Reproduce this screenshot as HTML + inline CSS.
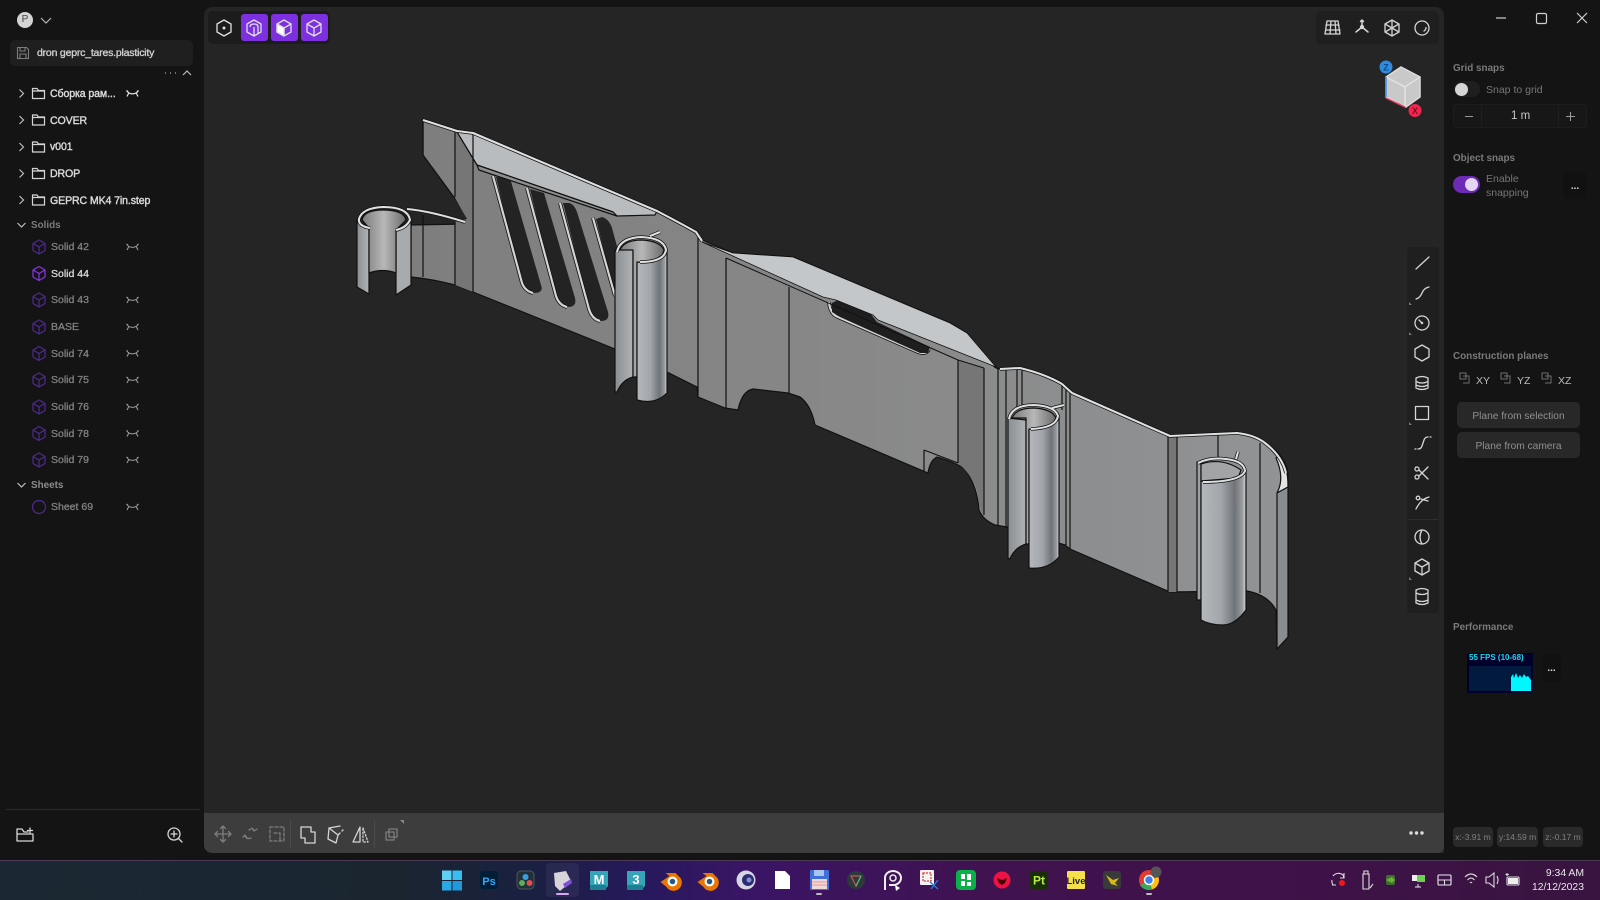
<!DOCTYPE html>
<html><head><meta charset="utf-8"><style>
*{box-sizing:border-box;margin:0;padding:0}
html,body{width:1600px;height:900px;overflow:hidden;background:#141414;font-family:"Liberation Sans","Noto Sans CJK SC",sans-serif}
#root{position:absolute;left:0;top:0;width:1600px;height:900px;overflow:hidden;background:#141414;filter:blur(.3px)}
.a{position:absolute}
.t{position:absolute;white-space:nowrap;line-height:14px;font-size:11px}
.row{color:#dadada;left:50px;font-size:10.6px;letter-spacing:-.12px;-webkit-text-stroke:.4px #dadada}
.sol{color:#808080;left:51px;font-size:10.5px;-webkit-text-stroke:.3px #808080}
.h{color:#7a7a7a;font-weight:700;font-size:9.9px}
svg{position:absolute;overflow:visible;width:1px;height:1px}
.i{fill:none;stroke:#d5d5d5;stroke-width:1.3;stroke-linecap:round;stroke-linejoin:round}
</style></head><body><div id="root">
<svg style="position:absolute;width:0;height:0"><defs>
<g id="cube"><path d="M0-7 6-3.500v7L0 7-6 3.500v-7ZM-6-3.500 0 0 6-3.500M0 0v7" fill="none" stroke-width="1.200" stroke-linejoin="round"/></g>
<g id="eye"><path d="M-6-3C-3 1.500 3 1.500 6-3M-5.500 3-3.800-.3M5.500 3 3.800-.3M-6-3l1.500 1M6-3 4.500-2" fill="none" stroke="#9a9a9a" stroke-width="1.100"/></g>
<g id="fold"><path d="M-6-5H-1.500L0-3H6V5H-6ZM-6-2.500H6" fill="none" stroke="#d5d5d5" stroke-width="1.200"/></g>
<g id="chev"><path d="M-2-4 2 0-2 4" fill="none" stroke="#bdbdbd" stroke-width="1.200"/></g>
<g id="down"><path d="M-4-2 0 2 4-2" fill="none" stroke="#bdbdbd" stroke-width="1.200"/></g>
<linearGradient id="wall" x1="0" x2="1" y1="0" y2="0"><stop offset="0" stop-color="#7e7e7e"/><stop offset=".5" stop-color="#888"/><stop offset="1" stop-color="#919395"/></linearGradient>
<linearGradient id="cyl" x1="0" x2="1" y1="0" y2="0"><stop offset="0" stop-color="#b4b8bc"/><stop offset=".45" stop-color="#a2a6aa"/><stop offset=".75" stop-color="#6f7479"/><stop offset=".92" stop-color="#999da1"/><stop offset="1" stop-color="#d8dadc"/></linearGradient>
<linearGradient id="cyl2" x1="0" x2="1" y1="0" y2="0"><stop offset="0" stop-color="#8c8f92"/><stop offset="1" stop-color="#b0b3b6"/></linearGradient>
<linearGradient id="inner" x1="0" x2="1" y1="0" y2="0"><stop offset="0" stop-color="#7a7a7a"/><stop offset=".5" stop-color="#b8b8b8"/><stop offset="1" stop-color="#6a6a6a"/></linearGradient>
<path id="rims" fill="none" d="M423 120 L457 131 L473 133 L657 211 Q680 223 696 232 L702 241
M1000 369 L1020 368 Q1045 374 1062 384 L1072 393 L1170 436 L1237 433 Q1255 435 1265 443 Q1282 456 1286 473
M370 228 Q358 226 359 219 Q362 208 383 207 Q408 207 410 220 Q406 228 396 230
M407 209 Q430 211 465 222
M617 252 Q620 238 641 237 Q664 238 666 250 Q664 262 640 262
M650 236 L660 232
M1009 419 Q1012 405 1034 405 Q1055 406 1058 416 Q1056 428 1031 429
M1052 408 L1064 405
M1198 463 Q1210 457 1226 459 Q1244 461 1245 471 Q1240 482 1203 482
M1236 459 L1238 452"/>
<path id="lips" fill="none" d="M493 176 L522 283 Q525 291 533 293
M527 188 L556 296 Q559 305 567 307
M560 203 L589 309 Q592 319 600 321
M593 218 L615 296
M829 302 Q830 314 838 317 L918 352 Q926 355 929 349"/>
</defs></svg>

<div class="a" style="left:204px;top:7px;width:1240px;height:846px;background:#252525;border-radius:8px 8px 0 8px"></div>

<!-- MODEL -->
<svg class="a" style="left:0;top:0;width:1600px;height:900px" viewBox="0 0 1600 900">
<g stroke="#111" stroke-width="1.200" stroke-linejoin="round">
<path d="M423 119 L457 130 L473 132 L657 210 Q680 222 697 231 L702 240 L733 253 L793 257 L950 323 L967 333 L990 362 Q995 369 1000 369 L1020 367 Q1045 373 1063 383 L1072 392 L1170 435 L1237 432 Q1255 434 1265 442 Q1285 455 1288 473 L1288 637 L1277 649 L1276 610 Q1268 595 1247 591 L1170 592 L1070 549 L1065 545 L1007 527 L995 525 Q983 520 979 510 Q977 485 965 470 Q960 464 937 457 Q930 460 928 473 L815 425 Q811 405 800 397 L788 393 L753 389 Q742 391 738 410 L725 408 L698 397 L697 387 L667 372 L615 349 L473 292 L455 285 Q432 279 411 277 L411 225 L465 224 L467 215 L423 155 Z" fill="url(#wall)"/>
<path d="M958 360 L984 368 V517 Q979 508 978 495 Q975 478 958 463Z M1168 435 L1177 435 V592 H1168Z M455 132 L473 135 V292 L455 285 V222 L467 219 L455 198Z" fill="#767676" stroke="none"/>
<path d="M496 177 L510 178 L541 285 Q544 293 534 293 L528 292 Q524 291 522 284Z" fill="#232323" stroke="none"/>
<path d="M530 189 L544 193 L575 298 Q577 307 568 307 L562 306 Q558 305 556 297Z" fill="#232323" stroke="none"/>
<path d="M563 203 L569 203 Q574 204 577 212 L608 312 Q610 321 601 321 L596 320 Q592 319 590 310Z" fill="#232323" stroke="none"/>
<path d="M596 219 L602 217 Q609 219 612 228 L618 250 V296 L614 290Z" fill="#232323" stroke="none"/>
<use href="#lips" stroke="#111" stroke-width="3.800"/><use href="#lips" stroke="#d2d4d5" stroke-width="2.200"/>
<path d="M832 303 L838 300 L870 313 L877 322 L930 347 L928 353 L920 353 L840 317 L832 312Z" fill="#1e1e1e" stroke="none"/>
<path d="M457 132 L473 134 L657 211 L655 215 L617 216 L613 212 L477 165Z" fill="#b9bcbf"/>
<path d="M477 165 L613 212 L617 216 L479 170Z" fill="#8e8f90"/>
<path d="M702 242 L733 253 L793 257 L950 323 L967 333 L996 367 L878 320 L873 315 L836 300 L823 297Z" fill="#c4c7c9" stroke-width=".800"/>
<path d="M1280 455 Q1288 465 1288 487 L1277 493 Q1285 478 1276 458Z" fill="#e2e3e4"/>
<path d="M1277 493 L1288 487 L1288 637 L1277 649Z" fill="#8a8d90"/>
<path d="M423 119V155M423 215V277M455 132V197M455 222V285M473 133V292M457 132 L477 165
M698 232V397M726 258V408M789 287V393M958 360V463M984 368V515M998 369V525M1006 370V528M1017 368V408M1022 369V408M1062 384V410M1066 386V545M1070 391V549M1168 435V592M1177 435V592M1218 434V458M1260 443V593M924 450V472M924 450 L958 463" fill="none"/>
<path d="M726 258 L958 360 L984 368" fill="none" stroke-width="1"/>
<path d="M357 220 L369 228 L369 294 L357 287Z" fill="url(#cyl2)"/>
<path d="M396 230 L411 220 L411 285 L396 295Z" fill="#a8abae"/>
<path d="M362 220 Q364 210 383 210 Q404 210 406 220 L396 230 V273 Q383 268 369 273 V228Z" fill="url(#inner)"/>
<path d="M615 250 L633 248 L633 377 Q622 380 617 392 L615 392Z" fill="url(#cyl2)"/>
<path d="M620 250 Q624 240 642 240 Q660 241 664 250 L660 262 L637 263 V377 H633 V250Z" fill="url(#inner)"/>
<path d="M637 262 Q655 264 667 250 L667 393 Q655 405 637 400Z" fill="url(#cyl)"/>
<path d="M1008 418 L1026 420 L1026 544 Q1014 548 1010 559 L1008 558Z" fill="url(#cyl2)"/>
<path d="M1012 418 Q1016 408 1034 408 Q1052 409 1056 418 L1050 428 L1029 430 V544 H1026 V418Z" fill="url(#inner)"/>
<path d="M1029 429 Q1050 432 1059 417 L1059 557 Q1048 570 1029 568Z" fill="url(#cyl)"/>
<path d="M1197 462 L1201 464 L1201 600 L1197 600Z" fill="#9ea1a4"/>
<path d="M1201 464 Q1222 457 1241 470 L1238 478 L1201 481Z" fill="#a2a4a6"/>
<path d="M1201 481 Q1235 485 1246 470 L1246 610 Q1235 625 1223 625 Q1210 625 1201 620Z" fill="url(#cyl)"/>
<use href="#rims" stroke="#111" stroke-width="3.600"/><use href="#rims" stroke="#dfe0e1" stroke-width="2.100"/>
</g>
</svg>

<!-- SIDEBAR -->
<div class="a" style="left:17px;top:12px;width:16px;height:16px;border-radius:50%;background:#d4d4d4;color:#444;font-size:10px;line-height:16px;text-align:center">P</div>
<svg style="left:46px;top:20px"><path d="M-5-2 0 3 5-2" fill="none" stroke="#b5b5b5" stroke-width="1.200"/></svg>
<div class="a" style="left:10px;top:40px;width:183px;height:26px;background:#1f1f1f;border-radius:5px"></div>
<svg style="left:23px;top:53px"><path d="M-5.500-5.500H3.500L5.500-3.500V5.500H-5.500ZM-3-5.500V-2H2V-5.500M-3 5.500V1H3V5.500" fill="none" stroke="#7d7d7d" stroke-width="1.100"/></svg>
<div class="t" style="left:37px;top:46px;color:#cfcfcf;font-size:10.5px;letter-spacing:-.2px;-webkit-text-stroke:.35px #cfcfcf">dron geprc_tares.plasticity</div>
<svg style="left:170px;top:73px"><path d="M-5 0h1M0 0h1M5 0h1" stroke="#aaa" stroke-width="1.200"/><path d="M13 2 17-2 21 2" fill="none" stroke="#bbb" stroke-width="1.200"/></svg>

<svg style="left:0;top:0">
<use href="#chev" x="21.500" y="93.500"/><use href="#fold" x="38.500" y="93.500"/>
<use href="#chev" x="21.500" y="120"/><use href="#fold" x="38.500" y="120"/>
<use href="#chev" x="21.500" y="147"/><use href="#fold" x="38.500" y="147"/>
<use href="#chev" x="21.500" y="173.500"/><use href="#fold" x="38.500" y="173.500"/>
<use href="#chev" x="21.500" y="200"/><use href="#fold" x="38.500" y="200"/>
<path transform="translate(132.500 93.500)" d="M-6-3C-3 1.500 3 1.500 6-3M-5.500 3-3.800-.3M5.500 3 3.800-.3M-6-3l1.500 1M6-3 4.500-2" fill="none" stroke="#e2e2e2" stroke-width="1.200"/>
<use href="#down" x="21.500" y="225"/><use href="#down" x="21.500" y="485"/>
<g stroke="#4f2a8c"><use href="#cube" x="39" y="247"/><use href="#cube" x="39" y="300"/><use href="#cube" x="39" y="327"/><use href="#cube" x="39" y="353.500"/><use href="#cube" x="39" y="380"/><use href="#cube" x="39" y="407"/><use href="#cube" x="39" y="433.500"/><use href="#cube" x="39" y="460"/></g>
<g stroke="#8a35e8"><use href="#cube" x="39" y="273.500"/></g>
<circle cx="39" cy="507" r="6.500" fill="none" stroke="#4f2a8c" stroke-width="1.200"/>
<use href="#eye" x="132.500" y="247"/><use href="#eye" x="132.500" y="300"/><use href="#eye" x="132.500" y="327"/><use href="#eye" x="132.500" y="353.500"/><use href="#eye" x="132.500" y="380"/><use href="#eye" x="132.500" y="407"/><use href="#eye" x="132.500" y="433.500"/><use href="#eye" x="132.500" y="460"/><use href="#eye" x="132.500" y="507"/>
</svg>
<div class="t row" style="top:87px">Сборка рам...</div>
<div class="t row" style="top:114px">COVER</div>
<div class="t row" style="top:140px">v001</div>
<div class="t row" style="top:167px">DROP</div>
<div class="t row" style="top:194px">GEPRC MK4 7in.step</div>
<div class="t h" style="left:31px;top:219px">Solids</div>
<div class="t sol" style="top:240px">Solid 42</div>
<div class="t sol" style="top:267px;color:#d8d8d8;-webkit-text-stroke:.3px #d8d8d8">Solid 44</div>
<div class="t sol" style="top:293px">Solid 43</div>
<div class="t sol" style="top:320px">BASE</div>
<div class="t sol" style="top:347px">Solid 74</div>
<div class="t sol" style="top:373px">Solid 75</div>
<div class="t sol" style="top:400px">Solid 76</div>
<div class="t sol" style="top:427px">Solid 78</div>
<div class="t sol" style="top:453px">Solid 79</div>
<div class="t h" style="left:31px;top:479px;color:#8c8c8c">Sheets</div>
<div class="t sol" style="top:500px">Sheet 69</div>
<div class="a" style="left:6px;top:809px;width:194px;height:1px;background:#2b2b2b"></div>
<svg style="left:25px;top:835px" class="i"><path d="M-8-6H-3L-1-3H3M8 0V6H-8V-6M-8-1H8M5-7V-2M2.500-4.500H7.500" /></svg>
<svg style="left:174px;top:834px" class="i"><circle r="6"/><path d="M-3 0H3M0-3V3M4.500 4.500 8 8"/></svg>

<!-- TOP TOOLBARS -->
<div class="a" style="left:208px;top:11px;width:122px;height:33px;background:#1c1c1c;border-radius:5px"></div>
<div class="a" style="left:241px;top:14px;width:27px;height:27px;background:#7c30e0;border-radius:3px"></div>
<div class="a" style="left:271px;top:14px;width:27px;height:27px;background:#7c30e0;border-radius:3px"></div>
<div class="a" style="left:301px;top:14px;width:27px;height:27px;background:#7c30e0;border-radius:3px"></div>
<svg style="left:0;top:0">
<g fill="none" stroke="#e0e0e0" stroke-width="1.300" stroke-linejoin="round">
<path d="M224 20 231 24V32L224 36 217 32V24Z"/><circle cx="224" cy="28" r=".8" fill="#ddd"/>
<path d="M254 20 261 24V32L254 36 247 32V24ZM254 36V27M250 27Q250 24 254 24T258 27V33"/>
<path d="M284 20 291 24V32L284 36 277 32V24ZM277 24 284 28 291 24M284 28V36"/><path d="M277 24 284 28V36L277 32Z" fill="#fff"/>
<path d="M314 20 321 24V32L314 36 307 32V24ZM307 24 314 28 321 24M314 28V36"/>
</g></svg>

<div class="a" style="left:1316px;top:11px;width:123px;height:33px;background:#1f1f1f;border-radius:5px"></div>
<svg style="left:0;top:0" class="i">
<path d="M1327 21H1338L1340 34H1325ZM1331 21 1330 34M1335 21 1336 34M1326 25H1339M1326 30H1340"/>
<path d="M1362 27V20M1362 27 1356 32M1362 27 1368 32M1360.500 21.500 1362 20 1363.500 21.500" stroke-width="1.500"/><circle cx="1362" cy="27" r="1.500" fill="#ddd"/>
<path d="M1392 20 1399 24V32L1392 36 1385 32V24ZM1385 24 1399 32M1399 24 1385 32M1392 20V36"/>
<circle cx="1422" cy="28" r="7"/><path d="M1426 27.500A4 4 0 0 1 1424 31"/>
</svg>

<!-- NAV CUBE -->
<svg style="left:0;top:0">
<path d="M1401 67 1420 77V97L1406 107 1386 97V77Z" fill="#c9c9c9" stroke="#dcdcdc" stroke-width="1.500"/>
<path d="M1386 77 1405 87 1420 77M1405 87V106" fill="none" stroke="#e2e2e2" stroke-width="1.500"/>
<path d="M1386 77V97" stroke="#3d8fe0" stroke-width="1.500"/><path d="M1386 98 1405 107" stroke="#e0405f" stroke-width="1.500"/>
<circle cx="1386" cy="67" r="6.500" fill="#2f8be0"/><circle cx="1415" cy="110.500" r="6.500" fill="#f0264e"/>
<text x="1386" y="70.500" font-size="9" font-weight="700" text-anchor="middle" fill="#114a88" font-family="Liberation Sans">Z</text>
<text x="1415" y="114" font-size="9" font-weight="700" text-anchor="middle" fill="#7c0f28" font-family="Liberation Sans">X</text>
</svg>

<!-- RIGHT TOOL COLUMN -->
<div class="a" style="left:1407px;top:247px;width:32px;height:366px;background:#1f1f1f;border-radius:4px"></div>
<div class="a" style="left:1408px;top:519px;width:30px;height:1px;background:#2e2e2e"></div>
<svg style="left:0;top:0" class="i">
<path d="M1416 269 1429 257"/>
<path d="M1416 299Q1420 298 1422 293T1429 287"/>
<circle cx="1422" cy="323" r="7"/><circle cx="1422" cy="323" r=".6"/><path d="M1422 323 1419 320"/>
<path d="M1422 345 1429 349V357L1422 361 1415 357V349Z"/>
<path d="M1416 378Q1422 375 1428 378V388Q1422 391 1416 388ZM1416 381.500Q1422 384.500 1428 381.500M1416 385Q1422 388 1428 385"/>
<rect x="1415.500" y="406.500" width="13" height="13"/>
<path d="M1418 449Q1421 449 1422 446L1424 440Q1425 437 1428 437M1416 449H1415M1430 437H1431"/>
<path d="M1416 467 1428 479M1428 467 1416 479"/><circle cx="1417" cy="469" r="2" fill="#1f1f1f"/><circle cx="1417" cy="477" r="2" fill="#1f1f1f"/>
<path d="M1416 509Q1421 499 1429 497M1421 499 1428 501"/><circle cx="1418" cy="498" r="1.800"/>
<circle cx="1422" cy="537" r="7"/><path d="M1422 530Q1418 537 1422 544" />
<path d="M1422 559 1429 563V571L1422 575 1415 571V563ZM1415 563 1422 567 1429 563M1422 567V575"/>
<path d="M1416 590Q1422 587 1428 590V603Q1422 606 1416 603ZM1416 593Q1422 596 1428 593M1416 600Q1422 603 1428 600"/>
</svg>
<svg style="left:0;top:0"><path d="M1409 302v3h3ZM1409 332v3h3ZM1409 422v3h3ZM1409 577v3h3Z" fill="#777"/></svg>

<!-- BOTTOM TOOLBAR -->
<div class="a" style="left:204px;top:813px;width:1240px;height:40px;background:#3d3d3d;border-radius:0 0 6px 8px"></div>
<svg style="left:0;top:0" class="i">
<g stroke="#7e7e7e"><path d="M223 826V842M215 834H231M220.500 828.500 223 826 225.500 828.500M220.500 839.500 223 842 225.500 839.500M217.500 831.500 215 834 217.500 836.500M228.500 831.500 231 834 228.500 836.500"/>
<path d="M245 835Q246 840 251 838M254 831Q253 827 249 830M252 828 254 831 257 829M247 838 245 835 243 837"/>
<path d="M270 827H284V841H270ZM274 833H280V841" stroke-dasharray="3 2"/>
<path d="M389 829H397V837H389Z"/><rect x="386" y="832" width="8" height="8"/></g>
<path d="M301 827H311V832H315V843H305V838H301Z"/>
<path d="M329 828 340 826M329 828 328 839 336 843 338 835 329 828M338 835 340 833M342 831 343 830" />
<path d="M353 842 360 827V842Z"/>
<path d="M363 828 368 842H363Z" stroke-dasharray="1.500 2"/>
</svg>
<div class="a" style="left:290px;top:820px;width:1px;height:28px;background:#4c4c4c"></div>
<div class="a" style="left:374px;top:820px;width:1px;height:28px;background:#4c4c4c"></div>
<svg style="left:0;top:0"><path d="M400 820h4v4Z" fill="#888"/><circle cx="1411" cy="833" r="1.700" fill="#ddd"/><circle cx="1416.500" cy="833" r="1.700" fill="#ddd"/><circle cx="1422" cy="833" r="1.700" fill="#ddd"/></svg>

<!-- RIGHT PANEL -->
<svg style="left:0;top:0" stroke="#cfcfcf" stroke-width="1.200" fill="none">
<path d="M1496 18H1506"/><rect x="1536.500" y="13.500" width="10" height="10" rx="1.500"/><path d="M1577 13 1587 23M1587 13 1577 23"/>
</svg>
<div class="t h" style="left:1453px;top:62px">Grid snaps</div>
<div class="a" style="left:1454px;top:81px;width:26px;height:16px;background:#1f1f1f;border-radius:8px"></div>
<div class="a" style="left:1455px;top:83px;width:13px;height:13px;background:#d5d5d5;border-radius:50%"></div>
<div class="t" style="left:1486px;top:83px;color:#777;font-size:10.5px">Snap to grid</div>
<div class="a" style="left:1453px;top:104px;width:134px;height:24px;background:#171717;border:1px solid #1d1d1d;border-radius:4px"></div>
<div class="a" style="left:1481px;top:105px;width:1px;height:22px;background:#1f1f1f"></div>
<div class="a" style="left:1558px;top:105px;width:1px;height:22px;background:#1f1f1f"></div>
<svg style="left:0;top:0" stroke="#999" stroke-width="1.100"><path d="M1465 116.500H1473M1566 116.500H1575M1570.500 112V121"/></svg>
<div class="t" style="left:1511px;top:109px;color:#c8c8c8;font-size:11.500px">1 m</div>
<div class="t h" style="left:1453px;top:152px">Object snaps</div>
<div class="a" style="left:1453px;top:176px;width:27px;height:17px;background:#6b2bb5;border-radius:9px"></div>
<div class="a" style="left:1465px;top:178px;width:13px;height:13px;background:#e3d5f3;border-radius:50%"></div>
<div class="t" style="left:1486px;top:172px;color:#777;font-size:10.5px">Enable</div>
<div class="t" style="left:1486px;top:186px;color:#777;font-size:10.5px">snapping</div>
<div class="a" style="left:1563px;top:172px;width:24px;height:27px;background:#111;border-radius:5px;color:#ddd;font-size:10px;text-align:center;line-height:30px;font-weight:700">...</div>
<div class="t h" style="left:1453px;top:350px">Construction planes</div>
<svg style="left:0;top:0" fill="none" stroke="#6e6e6e" stroke-width="1"><path d="M1460 373H1466V379H1460ZM1463 376H1469V383H1463" /><path d="M1501 373H1507V379H1501ZM1504 376H1510V383H1504"/><path d="M1542 373H1548V379H1542ZM1545 376H1551V383H1545"/></svg>
<div class="t" style="left:1476px;top:374px;color:#bbb;font-size:10.5px">XY</div>
<div class="t" style="left:1517px;top:374px;color:#bbb;font-size:10.5px">YZ</div>
<div class="t" style="left:1558px;top:374px;color:#bbb;font-size:10.5px">XZ</div>
<div class="a" style="left:1457px;top:402px;width:123px;height:26px;background:#282828;border-radius:5px;color:#8f8f8f;font-size:10.2px;text-align:center;line-height:29px">Plane from selection</div>
<div class="a" style="left:1457px;top:432px;width:123px;height:26px;background:#282828;border-radius:5px;color:#8f8f8f;font-size:10.2px;text-align:center;line-height:29px">Plane from camera</div>
<div class="t h" style="left:1453px;top:621px">Performance</div>
<div class="a" style="left:1467px;top:653px;width:66px;height:40px;background:#00002a;border-radius:2px"></div>
<div class="a" style="left:1469px;top:666px;width:62px;height:25px;background:#021a3d"></div>
<div class="t" style="left:1469px;top:651px;color:#1fd8e8;font-size:8px;font-weight:700">55 FPS (10-68)</div>
<svg style="left:0;top:0"><path d="M1511 691V677L1513 674 1514 678 1516 673 1518 678 1520 675 1522 678 1524 674 1526 677 1528 676 1531 680V691Z" fill="#00f7ff"/></svg>
<div class="a" style="left:1542px;top:654px;width:19px;height:28px;background:#111;border-radius:5px;color:#ddd;font-size:10px;text-align:center;line-height:30px;font-weight:700">...</div>
<div class="a" style="left:1453px;top:827px;width:40px;height:20px;background:#2a2a2a;border-radius:4px;color:#808080;font-size:8.500px;text-align:center;line-height:20px">x:-3.91 m</div>
<div class="a" style="left:1497px;top:827px;width:41px;height:20px;background:#2a2a2a;border-radius:4px;color:#808080;font-size:8.500px;text-align:center;line-height:20px">y:14.59 m</div>
<div class="a" style="left:1543px;top:827px;width:40px;height:20px;background:#2a2a2a;border-radius:4px;color:#808080;font-size:8.500px;text-align:center;line-height:20px">z:-0.17 m</div>

<!-- TASKBAR -->
<div class="a" style="left:0;top:860px;width:1600px;height:40px;background:linear-gradient(90deg,#1b2833 0,#1a2530 25%,#1a2040 33%,#26195c 40%,#3a1565 47%,#40124f 62%,#3f1249 80%,#38143f 100%);border-top:1px solid #4a3a55"></div>
<div class="a" style="left:546px;top:863px;width:33px;height:34px;background:rgba(255,255,255,.05);border-radius:4px"></div>
<div class="a" style="left:556px;top:893px;width:13px;height:2px;background:#d9a5f0;border-radius:1px"></div>
<div class="a" style="left:816px;top:893px;width:6px;height:2px;background:#bbb;border-radius:1px"></div>
<div class="a" style="left:1146px;top:893px;width:6px;height:2px;background:#bbb;border-radius:1px"></div>
<svg style="left:0;top:0" font-family="Liberation Sans">
<g fill="#37bdf0"><rect x="442" y="870.500" width="9.500" height="9.500" fill="#5fd0f5"/><rect x="452.500" y="870.500" width="9.500" height="9.500"/><rect x="442" y="881" width="9.500" height="9.500" fill="#2aa8e6"/><rect x="452.500" y="881" width="9.500" height="9.500" fill="#2098da"/></g>
<rect x="480" y="871" width="18" height="18" rx="3" fill="#001e36"/><text x="489" y="885" font-size="11" font-weight="700" text-anchor="middle" fill="#31a8ff">Ps</text>
<rect x="517" y="871" width="17" height="18" rx="4" fill="#23303a" stroke="#4a5a5a"/><circle cx="525.500" cy="877" r="3" fill="#3a9fe0"/><circle cx="522" cy="883" r="3" fill="#5ab05a"/><circle cx="529.500" cy="883" r="3" fill="#e05050"/>
<path d="M554 873 566 871 571 881 566 886 560 891 555 886Z" fill="#d8d4dc"/><path d="M563 884 571 879 572 883 565 888Z" fill="#7d50d8"/>
<path d="M590 871H608V886L604 890H590Z" fill="#37a5b8"/><text x="599" y="884" font-size="13" font-weight="700" text-anchor="middle" fill="#fff">M</text><rect x="590" y="885" width="16" height="5" fill="#1f7f92"/>
<path d="M627 871H645V886L641 890H627Z" fill="#37a5b8"/><text x="636" y="884" font-size="13" font-weight="700" text-anchor="middle" fill="#fff">3</text><rect x="627" y="885" width="16" height="5" fill="#1f7f92"/>
<g transform="translate(-2.500 0)"><path d="M663 882 672 876 668 873 678 873 683 878A8 8 0 1 1 669 887L663 882Z" fill="#ea7600"/><circle cx="675" cy="881.500" r="5" fill="#fff"/><circle cx="675" cy="881.500" r="2.800" fill="#265787"/></g>
<g transform="translate(34.500 0)"><path d="M663 882 672 876 668 873 678 873 683 878A8 8 0 1 1 669 887L663 882Z" fill="#ea7600"/><circle cx="675" cy="881.500" r="5" fill="#fff"/><circle cx="675" cy="881.500" r="2.800" fill="#265787"/></g>
<circle cx="746" cy="880" r="9.500" fill="#d5d8e4"/><circle cx="748" cy="880" r="6" fill="#2a2d70"/><circle cx="749" cy="880" r="2.500" fill="#8a8fd8"/>
<path d="M775 871H785L790 876V889H775Z" fill="#fff"/>
<rect x="810" y="870" width="19" height="20" rx="1" fill="#3f6fd8"/><rect x="814" y="870" width="10" height="6" fill="#a8c4f0"/><rect x="812" y="879" width="15" height="10" fill="#f0d8d8"/><path d="M812 882H827M812 885H827" stroke="#d88" stroke-width=".800"/>
<circle cx="856" cy="880" r="9" fill="#2c3a3c"/><path d="M851 876H861L856 886Z" fill="none" stroke="#c05a55" stroke-width="1.200"/><path d="M856 886 861 876" stroke="#5cb878" stroke-width="1.200"/>
<path d="M885 890V878A8 7 0 1 1 893 885H889" fill="none" stroke="#eee" stroke-width="2"/><circle cx="893" cy="878" r="3" fill="none" stroke="#eee" stroke-width="1.500"/><path d="M895 885 900 888 896 891Z" fill="#fff"/>
<rect x="920" y="870" width="14" height="15" rx="1" fill="#f2f2f2"/><rect x="923" y="873" width="8" height="8" fill="none" stroke="#d83b3b" stroke-dasharray="2 1" stroke-width="1.200"/><path d="M930 882 938 889M938 880 931 889" stroke="#2b7fd8" stroke-width="1.300"/>
<rect x="956" y="870" width="20" height="20" rx="4" fill="#0cb04a"/><path d="M961 874H965V879H961ZM967 874H971V880H967ZM961 881H965V886H961ZM967 882H971V886H967Z" fill="#fff"/>
<circle cx="1002" cy="880" r="8.500" fill="#ee1144"/><path d="M997 878 1002 880 1007 878 1005 883 1002 885 999 883Z" fill="#400"/>
<rect x="1030" y="871" width="18" height="18" rx="2" fill="#1a2e0a"/><text x="1039" y="884.500" font-size="12" font-weight="700" text-anchor="middle" fill="#b9f03c">Pt</text>
<rect x="1067" y="871" width="18" height="18" rx="1" fill="#f4e04a"/><text x="1076" y="884" font-size="9.500" font-weight="700" text-anchor="middle" fill="#222">Live</text>
<rect x="1103" y="871" width="18" height="18" rx="3" fill="#3a3a3a"/><path d="M1106 875 1113 880 1119 878 1115 883 1118 886 1111 884Z" fill="#d8b818"/>
<circle cx="1149" cy="880" r="10" fill="#e33b2e"/><path d="M1149 880 1140 885A10 10 0 0 0 1152 889.500Z" fill="#3aa757"/><path d="M1149 880 1158.500 877A10 10 0 0 1 1152 889.500Z" fill="#fbc116"/><circle cx="1149" cy="880" r="4.500" fill="#3f80e8" stroke="#fff" stroke-width="1.500"/>
<circle cx="1156" cy="872" r="5.500" fill="#555"/>
<g fill="none" stroke="#dcdcdc" stroke-width="1.100">
<path d="M1333 876A7 7 0 0 1 1343 875L1344 878M1344 873V878H1340M1333 885A7 7 0 0 1 1332 880M1332 885H1336"/>
<path d="M1363 874H1369V889H1363ZM1364 874V871H1368V874M1370 888 1373 884"/>
<rect x="1438" y="875" width="13" height="10" rx="1" stroke="#eee"/><path d="M1438 880H1451M1444.500 880V885"/>
<path d="M1465 877Q1471 871 1477 877M1467.500 880Q1471 876 1474.500 880M1470 883Q1471 881.500 1472 883"/>
<path d="M1486 877H1489L1494 873V887L1489 883H1486ZM1497 876Q1499 880 1497 884"/>
<rect x="1507" y="877" width="12" height="8" rx="1"/><path d="M1519 879.500V882.500M1507 873V876M1505.500 874.500H1509"/>
</g>
<circle cx="1342" cy="883" r="3" fill="#f01818"/>
<rect x="1386" y="875" width="9" height="10" fill="#3c6f2a" rx="2"/><path d="M1386 880 1392 877 1395 880 1392 883Z" fill="#6fb03c"/>
<rect x="1412" y="875" width="6" height="6" fill="#eee"/><rect x="1417" y="875" width="8" height="7" fill="#6dd04e"/><path d="M1418 884V887M1415 887H1421" stroke="#eee"/>
<rect x="1508" y="878" width="10" height="6" fill="#eee"/>
</svg>
<div class="t" style="right:16px;top:867px;color:#e8e8e8;font-size:10.4px;text-align:right">9:34 AM</div>
<div class="t" style="right:16px;top:881px;color:#e8e8e8;font-size:10.4px;text-align:right">12/12/2023</div>
</div></body></html>
